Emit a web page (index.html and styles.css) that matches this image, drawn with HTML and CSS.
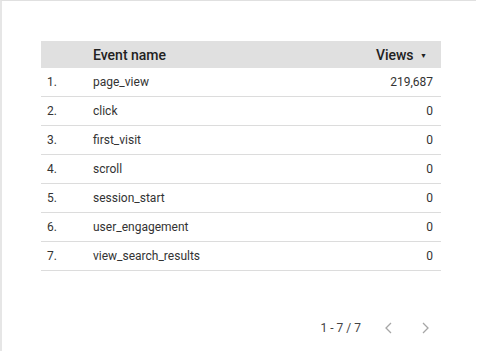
FILE: index.html
```html
<!DOCTYPE html>
<html>
<head>
<meta charset="utf-8">
<link rel="stylesheet" href="styles.css">
</head>
<body>
<div class="frame">
  <div class="table">
    <div class="row head">
      <div class="num"></div>
      <div class="name">Event name</div>
      <div class="val">Views <span class="sort">▼</span></div>
    </div>
    <div class="row"><div class="num">1.</div><div class="name">page_view</div><div class="val">219,687</div></div>
    <div class="row"><div class="num">2.</div><div class="name">click</div><div class="val">0</div></div>
    <div class="row"><div class="num">3.</div><div class="name">first_visit</div><div class="val">0</div></div>
    <div class="row"><div class="num">4.</div><div class="name">scroll</div><div class="val">0</div></div>
    <div class="row"><div class="num">5.</div><div class="name">session_start</div><div class="val">0</div></div>
    <div class="row"><div class="num">6.</div><div class="name">user_engagement</div><div class="val">0</div></div>
    <div class="row"><div class="num">7.</div><div class="name">view_search_results</div><div class="val">0</div></div>
  </div>
  <div class="pager">
    <span class="count">1 - 7 / 7</span>
    <svg class="chev" width="12" height="14" viewBox="0 0 12 14"><path d="M8 2 L3 7 L8 12" fill="none" stroke="#a6a6a6" stroke-width="1.3"/></svg>
    <svg class="chev" width="12" height="14" viewBox="0 0 12 14"><path d="M4 2 L9 7 L4 12" fill="none" stroke="#a6a6a6" stroke-width="1.3"/></svg>
  </div>
</div>
</body>
</html>
```
FILE: styles.css
```css
html, body {
  margin: 0;
  padding: 0;
  background: #fff;
}
.frame {
  width: 476px;
  height: 351px;
  border-top: 1px solid #e0e0e0;
  border-left: 2px solid #e6e6e6;
  font-family: Roboto, "Liberation Sans", sans-serif;
  color: #333;
  padding: 40px 0 0 39px;
  box-sizing: border-box;
  display: flex;
  flex-direction: column;
}
.table {
  width: 400px;
}
.row {
  display: flex;
  align-items: center;
  height: 28px;
  border-bottom: 1px solid #dcdcdc;
  font-size: 12px;
}
.row.head {
  height: 27px;
  background: #e0e0e0;
  border-bottom: none;
  font-size: 14px;
  font-weight: 500;
  color: #222;
}
.num {
  width: 52px;
  padding-left: 6px;
  box-sizing: border-box;
}
.name {
  flex: 1;
}
.val {
  padding-right: 8px;
  text-align: right;
}
.head .val {
  padding-right: 14px;
}
.sort {
  font-size: 7px;
  margin-left: 3px;
  vertical-align: 2px;
}
.pager {
  display: flex;
  align-items: center;
  justify-content: flex-end;
  margin-top: 50px;
  width: 400px;
  font-size: 12px;
  color: #444;
}
.count {
  margin-right: 22px;
}
.chev {
  margin-right: 24px;
}
.chev:last-child {
  margin-right: 10px;
}
```
